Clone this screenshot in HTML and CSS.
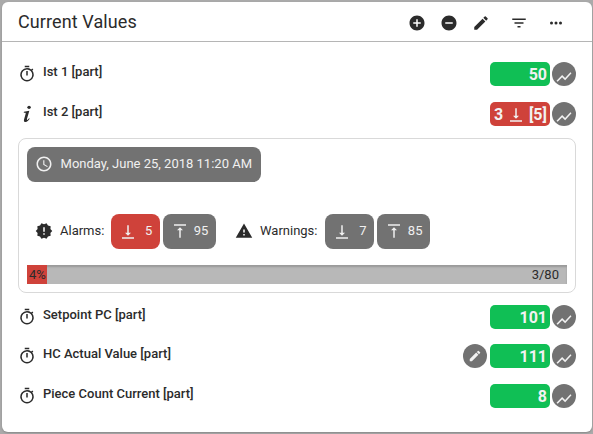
FILE: index.html
```
<!DOCTYPE html>
<html lang="en">
<head>
<meta charset="utf-8">
<title>Current Values</title>
<link rel="stylesheet" href="styles.css">
</head>
<body>
<svg class="sprite" aria-hidden="true">
  <symbol id="plus" viewBox="0 0 24 24"><path d="M12 2C6.48 2 2 6.48 2 12s4.48 10 10 10 10-4.48 10-10S17.52 2 12 2zm5 11h-4v4h-2v-4H7v-2h4V7h2v4h4v2z"/></symbol>
  <symbol id="minus" viewBox="0 0 24 24"><path d="M12 2C6.48 2 2 6.48 2 12s4.48 10 10 10 10-4.48 10-10S17.52 2 12 2zm5 11H7v-2h10v2z"/></symbol>
  <symbol id="edit" viewBox="0 0 24 24"><path d="M3 17.25V21h3.75L17.81 9.94l-3.75-3.75L3 17.25zM20.71 7.04a1 1 0 0 0 0-1.41l-2.34-2.34a1 1 0 0 0-1.41 0l-1.83 1.83 3.75 3.75 1.83-1.83z"/></symbol>
  <symbol id="filter" viewBox="0 0 24 24"><path d="M10 18h4v-2h-4v2zM3 6v2h18V6H3zm3 7h12v-2H6v2z"/></symbol>
  <symbol id="more" viewBox="0 0 24 24"><path d="M6 10a2 2 0 1 0 0 4 2 2 0 0 0 0-4zm12 0a2 2 0 1 0 0 4 2 2 0 0 0 0-4zm-6 0a2 2 0 1 0 0 4 2 2 0 0 0 0-4z"/></symbol>
  <symbol id="timer" viewBox="0 0 24 24"><path d="M15 1H9v2h6V1zm-4 13h2V8h-2v6zm8.03-6.61 1.42-1.42c-.43-.51-.9-.99-1.41-1.41l-1.42 1.42A8.96 8.96 0 0 0 12 4a9 9 0 1 0 7.03 3.39zM12 20a7 7 0 1 1 0-14 7 7 0 0 1 0 14z"/></symbol>
  <symbol id="info" viewBox="0 0 12 20"><circle cx="8.300" cy="2.600" r="1.900"/><path d="M2.600 7.400 8.600 6.400 6 15.400c-.3 1.200.1 1.500.8.9l1.500-1.500.7.6c-1.400 2.200-2.900 3.600-4.600 3.600-1.700 0-2.100-1.300-1.700-2.900l1.800-6.300c.2-.9 0-1.300-.7-1.300H2.400z"/></symbol>
  <symbol id="chart" viewBox="0 0 24 24"><path d="m3.500 18.490 6-6.010 4 4L22 6.920l-1.410-1.410-7.090 7.970-4-4L2 16.990z"/></symbol>
  <symbol id="clock" viewBox="0 0 24 24"><path d="M11.990 2C6.470 2 2 6.480 2 12s4.470 10 9.990 10C17.520 22 22 17.520 22 12S17.520 2 11.990 2zM12 20a8 8 0 1 1 0-16 8 8 0 0 1 0 16zm.5-13H11v6l5.250 3.150.75-1.230-4.500-2.670z"/></symbol>
  <symbol id="down" viewBox="0 0 24 24"><path d="M16 13h-3V3h-2v10H8l4 4 4-4zM4 19v2h16v-2H4z"/></symbol>
  <symbol id="up" viewBox="0 0 24 24"><path d="M8 11h3v10h2V11h3l-4-4-4 4zM4 3v2h16V3H4z"/></symbol>
  <symbol id="alarm" viewBox="0 0 24 24"><path d="m23 12-2.440-2.780.34-3.680-3.610-.82-1.890-3.180L12 3 8.600 1.540 6.710 4.720l-3.610.81.34 3.680L1 12l2.440 2.780-.34 3.690 3.610.82 1.890 3.180L12 21l3.400 1.460 1.890-3.180 3.610-.82-.34-3.680L23 12zm-10 5h-2v-2h2v2zm0-4h-2V7h2v6z"/></symbol>
  <symbol id="warning" viewBox="0 0 24 24"><path d="M1 21h22L12 2 1 21zm12-3h-2v-2h2v2zm0-4h-2v-4h2v4z"/></symbol>
</svg>
<main class="card">
  <header class="header">
    <h1>Current Values</h1>
    <nav class="tools">
      <svg class="tool"><use href="#plus"/></svg>
      <svg class="tool"><use href="#minus"/></svg>
      <svg class="tool"><use href="#edit"/></svg>
      <svg class="tool filter"><use href="#filter"/></svg>
      <svg class="tool more"><use href="#more"/></svg>
    </nav>
  </header>
  <section class="list">
    <div class="row first">
      <svg class="kind"><use href="#timer"/></svg><span class="name">Ist 1 [part]</span>
      <span class="value">50</span><span class="round"><svg><use href="#chart"/></svg></span>
    </div>
    <div class="row">
      <svg class="kind"><use href="#info"/></svg><span class="name">Ist 2 [part]</span>
      <span class="value bad"><span>3</span><svg><use href="#down"/></svg><span>[5]</span></span><span class="round"><svg><use href="#chart"/></svg></span>
    </div>
    <div class="panel">
      <div class="chip date"><svg><use href="#clock"/></svg><span>Monday, June 25, 2018 11:20 AM</span></div>
      <div class="limits">
        <div class="group alarms">
          <svg><use href="#alarm"/></svg><span class="label">Alarms:</span>
          <span class="chip low bad"><svg><use href="#down"/></svg>5</span>
          <span class="chip high"><svg><use href="#up"/></svg>95</span>
        </div>
        <div class="group warnings">
          <svg><use href="#warning"/></svg><span class="label">Warnings:</span>
          <span class="chip low"><svg><use href="#down"/></svg>7</span>
          <span class="chip high"><svg><use href="#up"/></svg>85</span>
        </div>
      </div>
      <div class="bar"><span class="fill">4%</span><span>3/80</span></div>
    </div>
    <div class="row after-panel">
      <svg class="kind"><use href="#timer"/></svg><span class="name">Setpoint PC [part]</span>
      <span class="value">101</span><span class="round"><svg><use href="#chart"/></svg></span>
    </div>
    <div class="row tight">
      <svg class="kind"><use href="#timer"/></svg><span class="name">HC Actual Value [part]</span>
      <span class="round pencil"><svg><use href="#edit"/></svg></span>
      <span class="value">111</span><span class="round"><svg><use href="#chart"/></svg></span>
    </div>
    <div class="row">
      <svg class="kind"><use href="#timer"/></svg><span class="name">Piece Count Current [part]</span>
      <span class="value">8</span><span class="round"><svg><use href="#chart"/></svg></span>
    </div>
  </section>
</main>
</body>
</html>
```
FILE: styles.css
```
* { box-sizing: border-box; }
body {
  margin: 0;
  height: 434px;
  padding: 2px 1px 2px 2px;
  background: #aaa;
  font: 13px/16px Roboto, sans-serif;
  color: #2b2b2b;
  overflow: hidden;
}
svg { display: block; flex: none; fill: currentColor; }
.sprite { display: none; }
.card {
  height: 430px;
  background: #fff;
  border-radius: 6px;
  box-shadow: 0 1px 2px #888;
}
.header {
  height: 40px;
  padding: 1px 27px 0 16px;
  border-bottom: 1px solid #b5b5b5;
  display: flex;
  align-items: center;
  justify-content: space-between;
}
h1 { margin: 0; font-size: 18px; line-height: 24px; font-weight: 400; letter-spacing: 0.1px; }
.tools { display: flex; align-items: center; gap: 14px; padding-top: 1px; }
.tool { width: 18px; height: 18px; }
.filter { margin-left: 6px; }
.more { margin-left: 5px; }
.list { padding: 20px 16px 0 16px; }
.row { height: 24px; margin-top: 16px; display: flex; align-items: center; }
.row.first { margin-top: 0; }
.row.after-panel { margin-top: 12px; }
.row.tight { margin-top: 15px; }
.kind { width: 18px; height: 18px; }
.name { flex: 1; margin-left: 7px; padding-bottom: 4px; font-weight: 500; }
.value {
  width: 60px;
  height: 24px;
  padding: 1px 3px 0 4px;
  border-radius: 5px;
  background: #10bf55;
  color: #f2f2f2;
  font-size: 16px;
  line-height: 23px;
  font-weight: 700;
  text-align: right;
}
.value.bad { display: flex; align-items: center; justify-content: space-between; }
.value svg { width: 18px; height: 18px; }
.bad { background: #cf423a; }
.round {
  width: 24px;
  height: 24px;
  margin-left: 2px;
  padding-top: 6px;
  border-radius: 50%;
  background: #727272;
  color: #f2f2f2;
  display: flex;
  align-items: center;
  justify-content: center;
}
.round svg { width: 18px; height: 18px; }
.round.pencil { margin-right: 3px; padding: 0; }
.round.pencil svg { width: 14px; height: 14px; }
.panel {
  height: 155px;
  margin-top: 12px;
  padding: 8px;
  border: 1px solid #d9d9d9;
  border-radius: 8px;
}
.chip {
  height: 35px;
  border-radius: 8px;
  background: #727272;
  color: #f0f0f0;
  display: flex;
  align-items: center;
  justify-content: space-between;
}
.chip.bad { background: #cf423a; }
.chip svg { width: 18px; height: 18px; }
.chip.date { width: 234px; padding: 0 9px 2px 8px; }
.limits { display: flex; margin-top: 32px; padding-left: 8px; }
.group { display: flex; align-items: center; }
.group > svg { width: 18px; height: 18px; margin-bottom: 2px; }
.alarms { width: 200px; }
.label { margin: 0 7px; padding-bottom: 2px; flex: none; }
.warnings .label { margin-right: 8px; }
.chip.low { width: 49px; padding: 0 8px 2px; margin-right: 3px; }
.chip.high { width: 53px; padding: 0 8px 2px; }
.chip.low svg { margin-top: 2px; }
.bar {
  height: 19px;
  margin-top: 16px;
  padding-right: 8px;
  background: #b8b8b8;
  box-shadow: inset 0 2px 2px #999;
  display: flex;
  justify-content: space-between;
  line-height: 19px;
}
.fill { width: 20px; padding-left: 2px; background: #cf423a; }
```
